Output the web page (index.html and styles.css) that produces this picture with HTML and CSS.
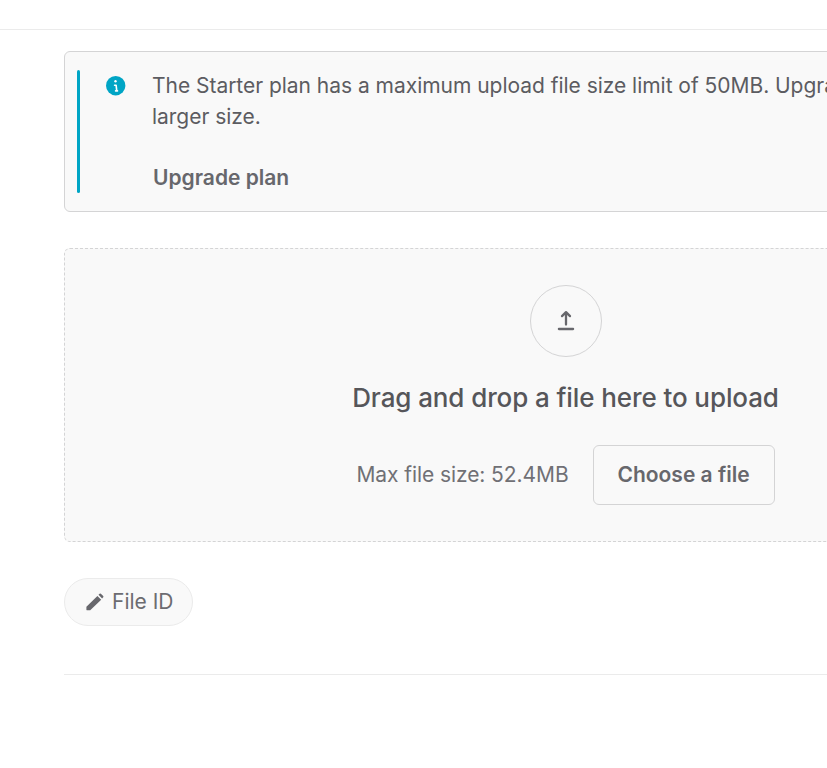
FILE: index.html
```html
<!DOCTYPE html>
<html lang="en">
<head>
<meta charset="utf-8">
<title>Upload file</title>
<link rel="stylesheet" href="styles.css">
</head>
<body>
<header class="topbar"></header>
<main class="content">
  <section class="note">
    <div class="note-bar"></div>
    <svg class="note-icon" viewBox="0 0 20 20" width="20" height="20"><circle cx="9.7" cy="9.7" r="9.7" fill="#00a5c5"/><path d="M8.6 9.2h1.5l.6 5.2M9.6 14.9h1.9" fill="none" stroke="#fff" stroke-width="1.6" stroke-linecap="round" stroke-linejoin="round"/><circle cx="9.5" cy="5.2" r="1.2" fill="#fff"/></svg>
    <div class="note-body">
      <p class="note-text">The Starter plan has a maximum upload file size limit of 50MB. Upgrade to upload<br>larger size.</p>
      <a class="note-link">Upgrade plan</a>
    </div>
  </section>
  <section class="drop">
    <div class="circle"><svg viewBox="0 0 24 24" width="24" height="24" fill="none" stroke="#67676c" stroke-width="2.3" stroke-linecap="round" stroke-linejoin="round"><path d="M12 15.5V3.7M8 7.1l4-4 4 4M4.9 20h14.2"/></svg></div>
    <h2 class="drop-title">Drag and drop a file here to upload</h2>
    <div class="drop-row"><span class="max">Max file size: 52.4MB</span><button class="choose">Choose a file</button></div>
  </section>
  <button class="pill"><svg viewBox="0 0 18 18" width="18" height="18" fill="#67676c"><path d="M.8 17.2q-.4-.1-.4-.5v-2.9L11.4 2.9l3.8 3.8L4.2 17.2zM12.5 1.8 13.6.7q.6-.6 1.3 0l2.3 2.3q.6.7 0 1.3l-1.1 1.2z"/></svg><span class="pill-label">File ID</span></button>
  <hr class="rule">
</main>
</body>
</html>
```
FILE: styles.css
```css
* { box-sizing: border-box; }
body { margin: 0; background: #fff; color: #5c5c61; font: 400 21px/31px Inter, sans-serif; overflow: hidden; }
.topbar { height: 30px; border-bottom: 1px solid #ebebeb; }
.content { width: 1003px; margin: 21px 0 0 64px; }
.note { display: flex; height: 161px; padding: 18px 12px; background: #f9f9f9; border: 1px solid #d4d4d5; border-radius: 6px; }
.note-bar { width: 3px; height: 123px; border-radius: 2px; background: #00a5c5; }
.note-icon { margin: 6px 0 0 26px; flex: none; }
.note-body { margin-left: 26px; white-space: nowrap; }
.note-text { margin: 0 0 30px; letter-spacing: -0.03px; }
.note-link { display: block; margin-left: 1px; font-weight: 600; color: #67676c; }
.drop { display: flex; flex-direction: column; align-items: center; height: 294px; margin-top: 36px; padding-top: 36px; background: #f9f9f9; border: 1px dashed #d4d4d5; border-radius: 6px; }
.circle { display: flex; align-items: center; justify-content: center; width: 72px; height: 72px; border: 1px solid #d4d4d5; border-radius: 50%; }
.drop-title { margin: 24px 0 30px; color: #56565a; font: 500 26px/34px Inter, sans-serif; letter-spacing: -0.1px; white-space: nowrap; }
.drop-row { display: flex; align-items: center; gap: 24px; color: #707075; white-space: nowrap; }
.max { padding-bottom: 2px; letter-spacing: -0.08px; }
.choose { width: 182px; height: 60px; padding: 0 0 2px; border: 1px solid #d4d4d5; border-radius: 6px; background: #f9f9f9; color: #67676c; font: 600 21px/31px Inter, sans-serif; }
.pill { display: flex; align-items: center; gap: 8px; width: 129px; height: 48px; margin-top: 36px; padding: 0 0 0 21px; border: 1px solid #ebebeb; border-radius: 24px; background: #f9f9f9; color: #6c6c71; font: 400 21px/31px Inter, sans-serif; }
.pill-label { padding-bottom: 2px; }
.rule { margin: 48px 0 0; border: 0; border-top: 1px solid #ebebeb; }
```
